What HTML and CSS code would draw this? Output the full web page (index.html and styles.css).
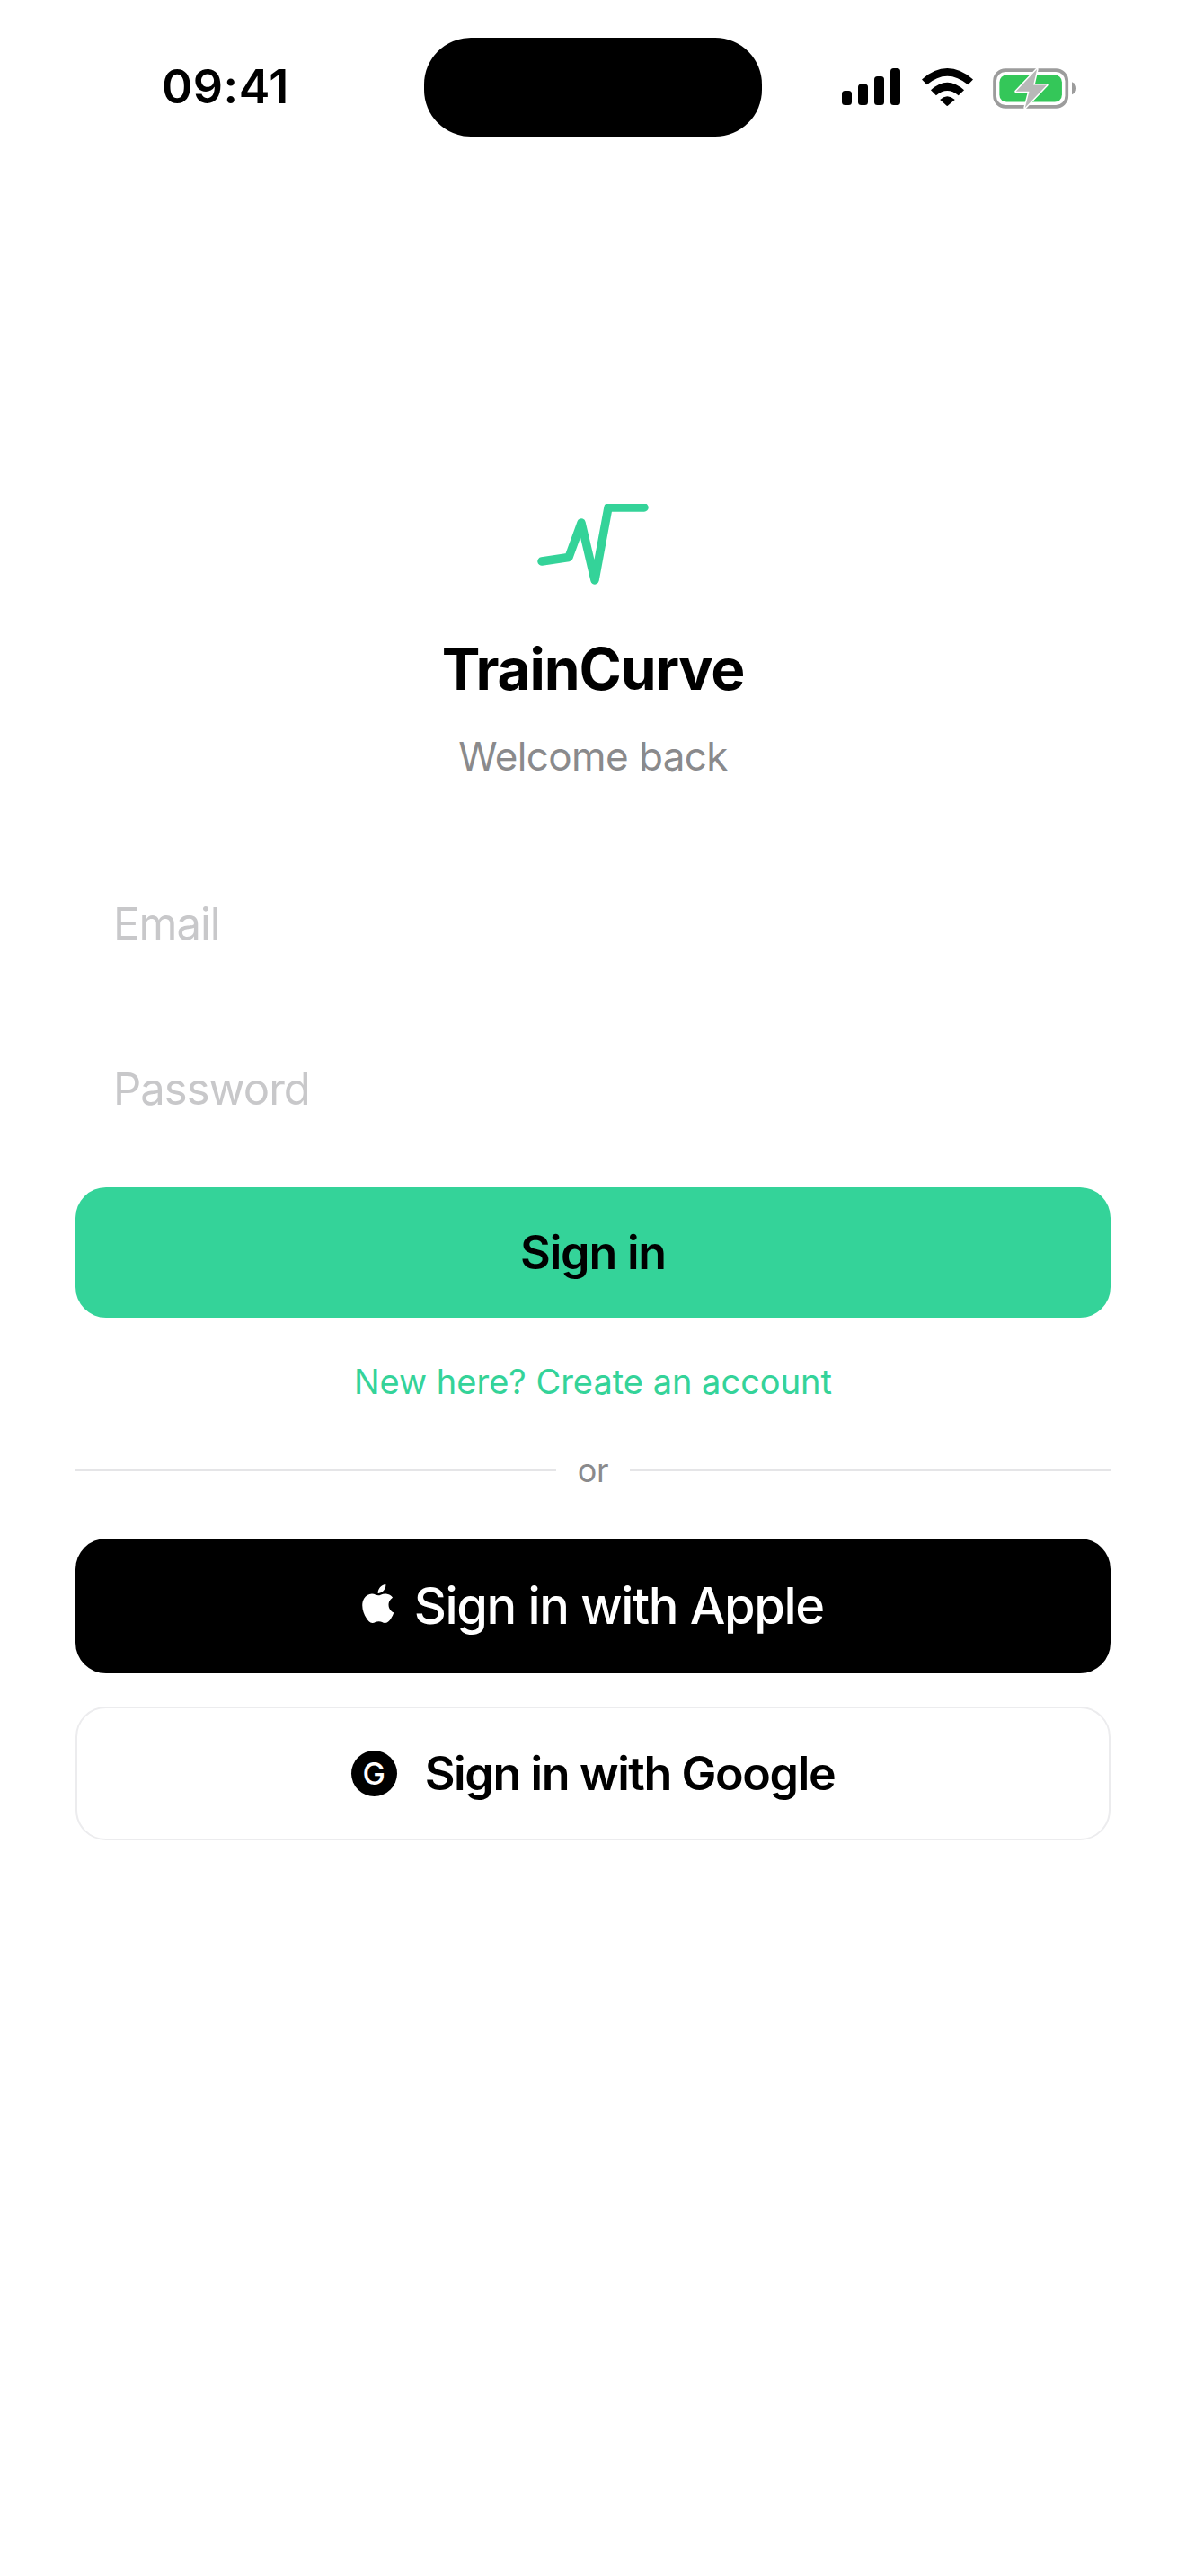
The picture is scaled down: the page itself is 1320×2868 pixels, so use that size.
FILE: index.html
```html
<!DOCTYPE html>
<html lang="en">
<head>
<meta charset="utf-8">
<title>TrainCurve</title>
<link rel="stylesheet" href="styles.css">
</head>
<body>
<div class="screen">
  <header class="status">
    <div class="time">09:41</div>
    <div class="island"></div>
    <div class="status-icons">
      <svg class="signal" viewBox="0 0 65 42" width="65" height="42" aria-hidden="true">
        <rect x="0" y="25" width="11" height="16" rx="3.5"/>
        <rect x="18" y="17.5" width="11" height="23.5" rx="3.5"/>
        <rect x="36" y="9" width="11" height="32" rx="3.5"/>
        <rect x="54" y="0" width="11" height="41" rx="3.5"/>
      </svg>
      <svg class="wifi" viewBox="375 75 172 126" width="57" height="42" aria-hidden="true">
        <path d="M375 112Q460 38 547 112L530 130Q460 72 392 130Z"/>
        <path d="M405 148Q460 96 517 148L498 166Q460 134 423 166Z"/>
        <path d="M436 180Q460 158 486 180L460 202Z"/>
      </svg>
      <svg class="battery" viewBox="612 70 284 140" width="95" height="47" aria-hidden="true">
        <rect class="bat-outline" x="621" y="79" width="240" height="122" rx="36"/>
        <rect class="bat-fill" x="637" y="95" width="208" height="90" rx="24"/>
        <path class="bat-nub" d="M878 118Q893 124 893 139Q893 154 878 160Z"/>
        <path class="bat-bolt" d="M762 76L692 150H736L722 204L795 128H750Z"/>
      </svg>
    </div>
  </header>
  <main class="content">
    <svg class="logo" viewBox="0 0 128 96" width="128" height="96" aria-hidden="true">
      <polyline points="7,64 37,59.5 51,21 66,85 81,4 121,4"/>
    </svg>
    <h1 class="title">TrainCurve</h1>
    <p class="subtitle">Welcome back</p>
    <form class="form">
      <div class="field">Email</div>
      <div class="field">Password</div>
      <button class="btn btn-primary" type="button">Sign in</button>
      <a class="link">New here? Create an account</a>
      <div class="divider"><span>or</span></div>
      <button class="btn btn-apple" type="button">
        <svg class="apple-icon" viewBox="2.1 0 19.8 24" width="35.5" height="43" aria-hidden="true">
          <path d="M12.152 6.896c-.948 0-2.415-1.078-3.96-1.04-2.04.027-3.91 1.183-4.961 3.014-2.117 3.675-.546 9.103 1.519 12.09 1.013 1.454 2.208 3.09 3.792 3.039 1.52-.065 2.09-.987 3.935-.987 1.831 0 2.35.987 3.96.948 1.637-.026 2.676-1.48 3.676-2.948 1.156-1.688 1.636-3.325 1.662-3.415-.039-.013-3.182-1.221-3.22-4.857-.026-3.04 2.48-4.494 2.597-4.559-1.429-2.09-3.623-2.324-4.39-2.376-2-.156-3.675 1.09-4.61 1.09zM15.53 3.83c.843-1.012 1.4-2.427 1.245-3.83-1.207.052-2.662.805-3.532 1.818-.78.896-1.454 2.338-1.273 3.714 1.338.104 2.715-.688 3.559-1.701"/>
        </svg>
        <span>Sign in with Apple</span>
      </button>
      <button class="btn btn-google" type="button">
        <span class="g-badge">G</span>
        <span>Sign in with Google</span>
      </button>
    </form>
  </main>
</div>
</body>
</html>
```

FILE: styles.css
```css
* { box-sizing: border-box; }
html, body { margin: 0; padding: 0; background: #fff; }
body { font-family: Inter, "Liberation Sans", sans-serif; color: #000; }
.screen { width: 1320px; height: 2868px; overflow: hidden; }

.status { display: grid; grid-template-columns: 472px 376px 1fr; padding-top: 42px; height: 152px; }
.time { padding-left: 180px; font-size: 52px; font-weight: 600; letter-spacing: 0.5px; line-height: 110px; height: 110px; }
.island { height: 110px; background: #000; border-radius: 52px; }
.status-icons { display: flex; align-items: flex-start; padding: 34px 0 0 89px; }
.signal { display: block; margin-right: 24px; }
.wifi { display: block; margin-right: 21px; }
.battery { display: block; margin-top: -1px; }
.bat-outline { fill: none; stroke: #9c9c9c; stroke-width: 11; }
.bat-fill { fill: #34c759; }
.bat-nub { fill: #9c9c9c; }
.bat-bolt { fill: #b8b8b8; stroke: #fff; stroke-width: 9; stroke-linejoin: round; paint-order: stroke; }

.content { display: flex; flex-direction: column; align-items: center; padding: 409px 84px 0; }
.logo { display: block; }
.logo polyline { fill: none; stroke: #34d399; stroke-width: 9.5; stroke-linecap: round; stroke-linejoin: round; }
.title { margin: 49px 0 0; font-size: 64px; line-height: 78px; font-weight: 700; letter-spacing: -1.15px; }
.subtitle { margin: 31px 0 0; font-size: 44px; line-height: 54px; letter-spacing: -0.6px; color: #8a8a8c; }

.form { width: 100%; display: flex; flex-direction: column; margin-top: 130px; }
.field { height: 184px; padding: 0 0 0 42px; font-size: 49px; line-height: 60px; letter-spacing: -1px; color: #c8c8ca; }
.field:nth-child(2) { height: 139px; }

.btn { display: flex; align-items: center; justify-content: center; width: 100%; border: 0; padding: 0; font-family: inherit; }
.btn-primary { height: 145px; border-radius: 34px; background: #34d399; color: #000; font-size: 52px; font-weight: 600; letter-spacing: -1.2px; }
.link { margin-top: 46px; text-align: center; font-size: 38px; line-height: 50px; letter-spacing: 0; color: #34d399; }
.divider { display: flex; align-items: center; gap: 24px; margin-top: 52px; font-size: 36px; line-height: 44px; letter-spacing: -0.3px; color: #8a8a8c; }
.divider::before, .divider::after { content: ""; flex: 1; height: 2px; background: #e5e5e7; }
.btn-apple { height: 150px; margin-top: 54px; border-radius: 34px; background: #000; color: #fff; font-size: 56px; font-weight: 500; letter-spacing: -1.35px; gap: 22px; }
.btn-google { height: 149px; margin-top: 37px; border-radius: 34px; background: #fff; border: 2px solid #ececee; color: #000; font-size: 52px; font-weight: 600; letter-spacing: -1.4px; gap: 31px; }
.apple-icon { display: block; fill: #fff; margin-top: -6px; }
.g-badge { display: flex; align-items: center; justify-content: center; width: 51px; height: 51px; border-radius: 50%; background: #000; color: #fff; font-size: 34px; font-weight: 500; letter-spacing: 0; }
```
